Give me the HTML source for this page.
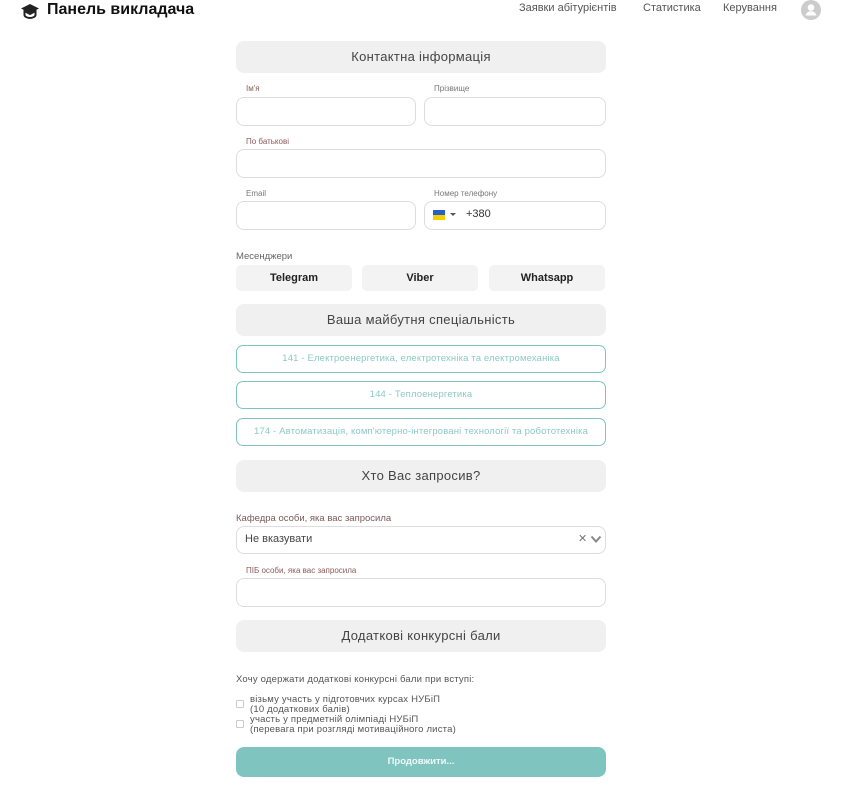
<!DOCTYPE html>
<html><head><meta charset="utf-8"><style>
*{box-sizing:border-box;margin:0;padding:0}
body{width:848px;height:797px;background:#fff;font-family:"Liberation Sans","Noto Sans CJK SC",sans-serif;position:relative;overflow:hidden;color:#333}
.a{position:absolute}
.hd{position:absolute;left:236px;width:370px;height:32px;background:#f0f0f0;border-radius:8px;text-align:center;line-height:32px;font-size:13px;color:#444;letter-spacing:0.3px}
.in{position:absolute;height:29px;border:1px solid #ddd;border-radius:8px;background:#fff}
.lb{position:absolute;font-size:8px;color:#8a5a5a}
.ms{position:absolute;top:265px;height:26px;width:116px;background:#f3f3f3;border-radius:5px;text-align:center;line-height:26px;font-size:11px;font-weight:bold;color:#222}
.sp{position:absolute;left:236px;width:370px;height:28px;border:1.5px solid #7fc4bf;border-radius:7px;text-align:center;line-height:25px;font-size:9.5px;color:#8ccac5;letter-spacing:0.15px}
.nav{position:absolute;top:2px;font-size:11px;color:#555}
.cb{position:absolute;left:236px;width:8px;height:8px;border:1px solid #ccc;border-radius:1px}
.ct{position:absolute;left:250px;font-size:9.5px;color:#555;line-height:9.5px;letter-spacing:0.2px}
</style></head><body>
<svg class="a" style="left:20px;top:3px" width="20" height="16" viewBox="0 0 20 16"><path d="M10 1L1 5.5 10 10 19 5.5Z" fill="#222"/><path d="M4.5 8v4c0 1.5 2.5 3 5.5 3s5.5-1.5 5.5-3V8L10 11 4.5 8Z" fill="none" stroke="#222" stroke-width="2"/></svg>
<div class="a" style="left:47px;top:1px;font-size:16px;color:#111;font-weight:bold">Панель викладача</div>
<div class="nav" style="left:519px">Заявки абітурієнтів</div>
<div class="nav" style="left:643px">Статистика</div>
<div class="nav" style="left:723px">Керування</div>
<svg class="a" style="left:801px;top:0" width="20" height="20" viewBox="0 0 20 20"><circle cx="10" cy="10" r="10" fill="#ccc"/><circle cx="10" cy="7.5" r="3.3" fill="#fff"/><path d="M4.5 15.5c1-3 3-4.2 5.5-4.2s4.5 1.2 5.5 4.2Z" fill="#fff"/></svg>

<div class="hd" style="top:41px">Контактна інформація</div>
<div class="lb" style="left:246px;top:84px">Ім'я</div>
<div class="lb" style="left:434px;top:84px;color:#777">Прізвище</div>
<div class="in" style="left:236px;top:97px;width:180px"></div>
<div class="in" style="left:424px;top:97px;width:182px"></div>
<div class="lb" style="left:246px;top:137px">По батькові</div>
<div class="in" style="left:236px;top:149px;width:370px"></div>
<div class="lb" style="left:246px;top:189px;color:#777">Email</div>
<div class="lb" style="left:434px;top:189px;color:#777">Номер телефону</div>
<div class="in" style="left:236px;top:201px;width:180px"></div>
<div class="in" style="left:424px;top:201px;width:182px"></div>
<div class="a" style="left:433px;top:210px;width:12px;height:5px;background:#2a5ec8"></div>
<div class="a" style="left:433px;top:215px;width:12px;height:5px;background:#f5d000"></div>
<div class="a" style="left:450px;top:213px;border:3px solid transparent;border-top:3px solid #555"></div>
<div class="a" style="left:466px;top:208px;font-size:11px;color:#333">+380</div>
<div class="a" style="left:236px;top:251px;font-size:9.5px;color:#666">Месенджери</div>
<div class="ms" style="left:236px">Telegram</div>
<div class="ms" style="left:362px">Viber</div>
<div class="ms" style="left:489px">Whatsapp</div>
<div class="hd" style="top:304px">Ваша майбутня спеціальність</div>
<div class="sp" style="top:345px">141 - Електроенергетика, електротехніка та електромеханіка</div>
<div class="sp" style="top:381px">144 - Теплоенергетика</div>
<div class="sp" style="top:418px">174 - Автоматизація, комп'ютерно-інтегровані технології та робототехніка</div>
<div class="hd" style="top:460px">Хто Вас запросив?</div>
<div class="a" style="left:236px;top:513px;font-size:9.5px;color:#7a5a5a">Кафедра особи, яка вас запросила</div>
<div class="in" style="left:236px;top:526px;width:370px;height:28px"></div>
<div class="a" style="left:245px;top:533px;font-size:11px;color:#444">Не вказувати</div>
<div class="a" style="left:578px;top:532px;font-size:11px;color:#777">✕</div>
<svg class="a" style="left:590px;top:535px" width="12" height="9" viewBox="0 0 12 9"><path d="M1.5 1.5 6 6.5 10.5 1.5" fill="none" stroke="#888" stroke-width="2"/></svg>
<div class="lb" style="left:246px;top:566px">ПІБ особи, яка вас запросила</div>
<div class="in" style="left:236px;top:578px;width:370px"></div>
<div class="hd" style="top:620px">Додаткові конкурсні бали</div>
<div class="a" style="left:236px;top:674px;font-size:9.5px;color:#555;letter-spacing:0.2px">Хочу одержати додаткові конкурсні бали при вступі:</div>
<div class="cb" style="top:700px"></div>
<div class="ct" style="top:695px">візьму участь у підготовчих курсах НУБіП<br>(10 додаткових балів)</div>
<div class="cb" style="top:720px"></div>
<div class="ct" style="top:715px">участь у предметній олімпіаді НУБіП<br>(перевага при розгляді мотиваційного листа)</div>
<div class="a" style="left:236px;top:747px;width:370px;height:30px;background:#7fc4bf;border-radius:8px;text-align:center;line-height:30px;font-size:9.5px;color:#eefaf8;font-weight:bold">Продовжити...</div>
</body></html>
